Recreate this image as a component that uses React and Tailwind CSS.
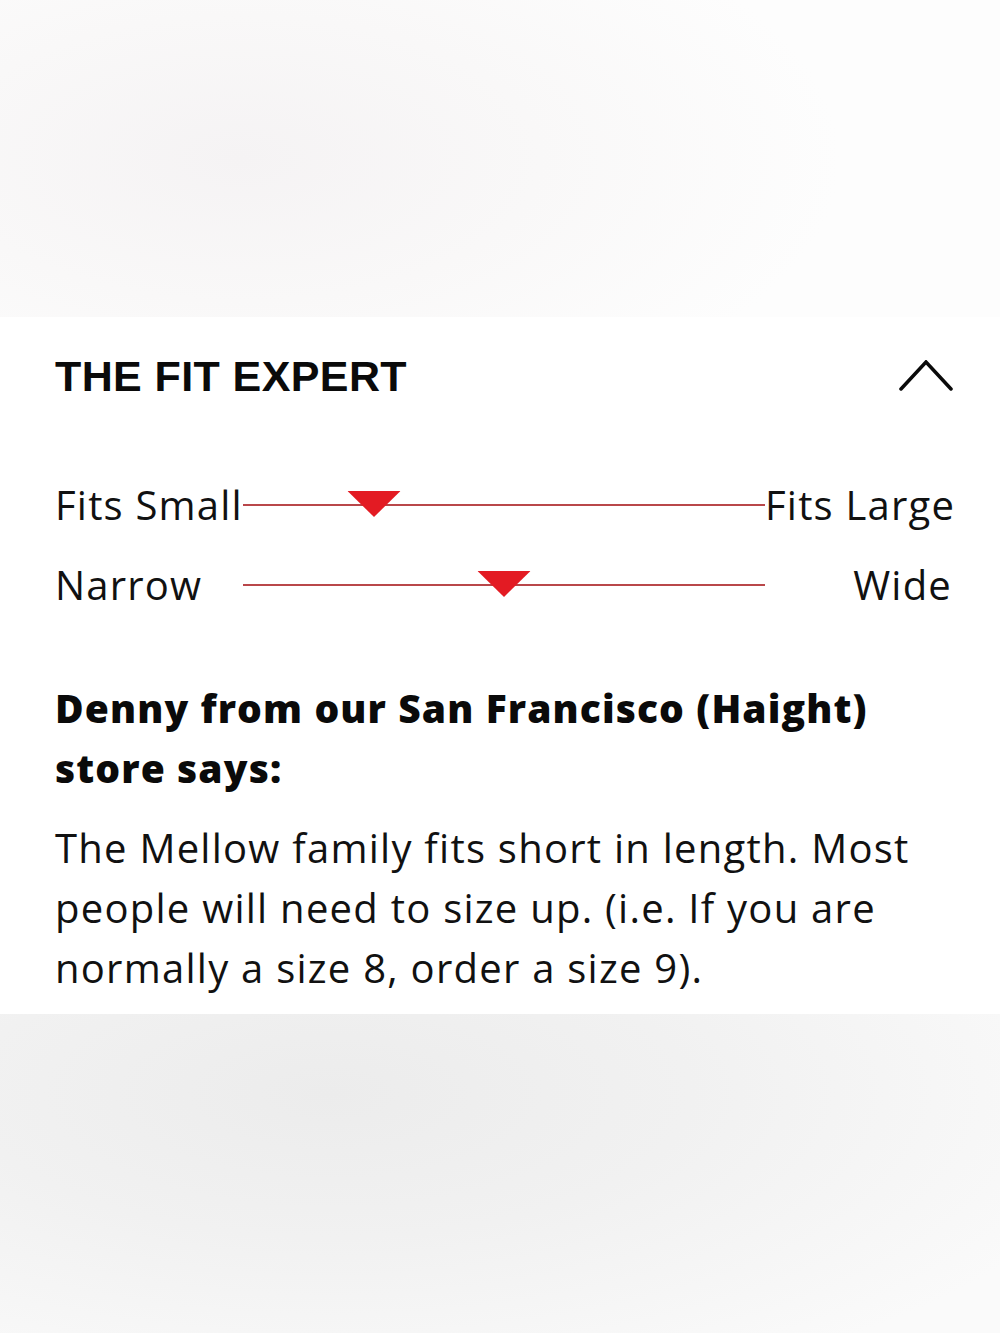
import React from "react";

const body = { fontFamily: '"Open Sans", "Noto Sans", sans-serif' };

function FitScale({ left, right, position }) {
  return (
    <div
      className="grid grid-cols-[188px_522px_1fr] items-center h-[60px] text-[40px] tracking-[1.2px] text-[#111]"
      style={body}
    >
      <span className="whitespace-nowrap">{left}</span>
      <div className="relative h-[60px] flex items-center">
        <div className="w-full h-[2px] bg-[#b9474a]" />
        <svg
          className="absolute top-[16px] -translate-x-1/2"
          style={{ left: `${position}%` }}
          width="53"
          height="26"
          viewBox="0 0 53 26"
        >
          <polygon points="0,0 53,0 26.5,26" fill="#e31b23" />
        </svg>
      </div>
      <span className="whitespace-nowrap text-right">{right}</span>
    </div>
  );
}

export default function App() {
  return (
    <div className="w-[1000px] h-[1333px] flex flex-col bg-white">
      <div className="h-[317px] bg-[radial-gradient(ellipse_60%_90%_at_24%_50%,#f5f3f4_0%,#f9f8f8_50%,#fdfdfd_100%)]" />
      <section className="bg-white pl-[55px] pr-[48px] pt-[29px] pb-[16px]">
        <div className="flex items-center justify-between h-[60px]">
          <h2
            className="text-[43px] font-bold text-[#0a0a0a] tracking-[0.4px]"
            style={{ fontFamily: '"Liberation Sans", Arial, sans-serif' }}
          >
            THE FIT EXPERT
          </h2>
          <svg width="54" height="32" viewBox="0 0 54 32" className="mr-[-1px]">
            <polyline points="2,29 27,2 52,29" fill="none" stroke="#0a0a0a" strokeWidth="3.5" strokeLinecap="round" strokeLinejoin="miter" />
          </svg>
        </div>
        <div className="mt-[69px] flex flex-col gap-[20px]">
          <FitScale left="Fits Small" right="Fits Large" position={25} />
          <FitScale left="Narrow" right="Wide" position={50} />
        </div>
        <h3
          className="mt-[63px] text-[39px] leading-[60px] font-extrabold text-[#0a0a0a] tracking-[1.1px] pr-[20px]"
          style={body}
        >
          Denny from our San Francisco (Haight) store says:
        </h3>
        <p className="mt-[20px] text-[40px] leading-[60px] tracking-[1.25px] text-[#111]" style={body}>
          The Mellow family fits short in length. Most people will need to size up. (i.e. If you are normally a size 8, order a size 9).
        </p>
      </section>
      <div className="flex-1 bg-[radial-gradient(ellipse_80%_100%_at_33%_25%,#ececec_0%,#f1f1f1_45%,#fafafa_100%)]" />
    </div>
  );
}
